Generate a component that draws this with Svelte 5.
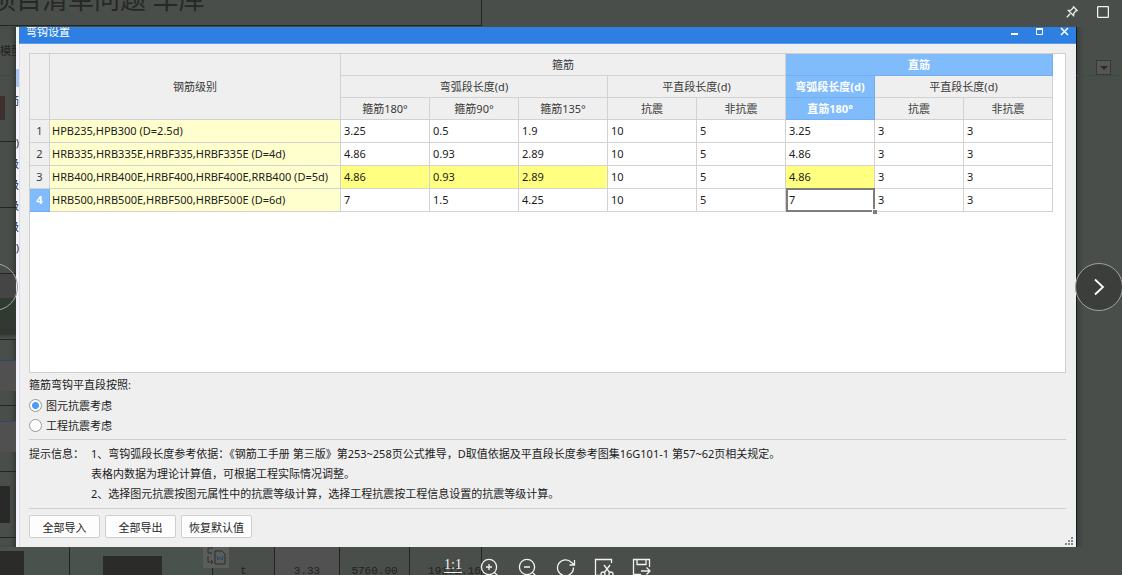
<script lang="ts">
  type Row = { name: string; values: string[]; changed?: number[] };

  const rows: Row[] = [
    { name: 'HPB235,HPB300 (D=2.5d)', values: ['3.25', '0.5', '1.9', '10', '5', '3.25', '3', '3'] },
    { name: 'HRB335,HRB335E,HRBF335,HRBF335E (D=4d)', values: ['4.86', '0.93', '2.89', '10', '5', '4.86', '3', '3'] },
    {
      name: 'HRB400,HRB400E,HRBF400,HRBF400E,RRB400 (D=5d)',
      values: ['4.86', '0.93', '2.89', '10', '5', '4.86', '3', '3'],
      changed: [0, 1, 2, 5],
    },
    { name: 'HRB500,HRB500E,HRBF500,HRBF500E (D=6d)', values: ['7', '1.5', '4.25', '10', '5', '7', '3', '3'] },
  ];

  const edgeText = ['筋', ')', '级', '级', '级', '级', ')'];

  let seismic = $state('element');
  let active = $state({ row: 3, col: 5 });
</script>

<div class="viewer">
  <header class="top">
    <div class="sheet-title">项目清单问题 车库</div>
    <div class="top-actions">
      <button class="icon" aria-label="置顶">
        <svg width="12" height="12" viewBox="0 0 12 12">
          <path d="M7.5 .8l3.7 3.7-1.2.4-2.1 2.1-.3 2.6-5.2-5.2 2.6-.3 2.1-2.1zM4.2 7.8L.8 11.2" />
        </svg>
      </button>
      <button class="icon" aria-label="最大化">
        <svg width="12" height="12" viewBox="0 0 12 12"><rect x=".6" y=".6" width="10.8" height="10.8" rx="1" /></svg>
      </button>
    </div>
  </header>

  <aside class="left">
    <div class="strip first">模型</div>
    <div class="strip"><i class="thumb brown"></i></div>
    <div class="strip"></div>
    <div class="strip"></div>
    <div class="strip cad"></div>
    <div class="strip"><i class="thumb pale"></i></div>
    <div class="strip"><i class="thumb grey"></i></div>
    <div class="strip"><i class="thumb dark"></i></div>
  </aside>

  <div class="edge">
    <i class="edge-mark"></i>
    {#each edgeText as t}<span>{t}</span>{/each}
  </div>

  <main class="dialog">
    <div class="titlebar">
      <h1>弯钩设置</h1>
      <div class="win-btns">
        <button aria-label="最小化"><svg width="9" height="9" viewBox="0 0 9 9"><path d="M1 7h7" /></svg></button>
        <button aria-label="还原"><svg width="9" height="9" viewBox="0 0 9 9"><path class="bar" d="M1 2h7" /><path class="box" d="M1.5 2v5.5h6V2" /></svg></button>
        <button aria-label="关闭"><svg width="9" height="9" viewBox="0 0 9 9"><path d="M1 1l7 7M8 1L1 8" /></svg></button>
      </div>
    </div>

    <div class="body">
      <div class="frame">
        <table>
          <colgroup>
            <col class="c-num" />
            <col class="c-name" />
            {#each Array(8) as _}<col class="c-val" />{/each}
          </colgroup>
          <thead>
            <tr>
              <th rowspan="3"></th>
              <th rowspan="3">钢筋级别</th>
              <th colspan="5">箍筋</th>
              <th colspan="3" class="on">直筋</th>
            </tr>
            <tr>
              <th colspan="3">弯弧段长度(d)</th>
              <th colspan="2">平直段长度(d)</th>
              <th class="on">弯弧段长度(d)</th>
              <th colspan="2">平直段长度(d)</th>
            </tr>
            <tr>
              <th>箍筋180°</th>
              <th>箍筋90°</th>
              <th>箍筋135°</th>
              <th>抗震</th>
              <th>非抗震</th>
              <th class="on">直筋180°</th>
              <th>抗震</th>
              <th>非抗震</th>
            </tr>
          </thead>
          <tbody>
            {#each rows as row, r}
              <tr>
                <th class:on={active.row === r}>{r + 1}</th>
                <td class="name">{row.name}</td>
                {#each row.values as v, c}
                  <td
                    class:changed={row.changed?.includes(c)}
                    class:active={active.row === r && active.col === c}
                    onclick={() => (active = { row: r, col: c })}
                  >{v}</td>
                {/each}
              </tr>
            {/each}
          </tbody>
        </table>
      </div>

      <fieldset>
        <legend>箍筋弯钩平直段按照:</legend>
        <label><input type="radio" name="seismic" value="element" bind:group={seismic} />图元抗震考虑</label>
        <label><input type="radio" name="seismic" value="project" bind:group={seismic} />工程抗震考虑</label>
      </fieldset>

      <div class="hints">
        <span class="hint-label">提示信息：</span>
        <div>
          <p>1、弯钩弧段长度参考依据：《钢筋工手册 第三版》第253~258页公式推导，D取值依据及平直段长度参考图集16G101-1 第57~62页相关规定。</p>
          <p>表格内数据为理论计算值，可根据工程实际情况调整。</p>
          <p>2、选择图元抗震按图元属性中的抗震等级计算，选择工程抗震按工程信息设置的抗震等级计算。</p>
        </div>
      </div>

      <div class="actions">
        <button>全部导入</button>
        <button>全部导出</button>
        <button>恢复默认值</button>
      </div>
    </div>
    <svg class="grip" width="8" height="8" viewBox="0 0 8 8">
      <path d="M6 0h2v2H6zM3 3h2v2H3zM6 3h2v2H6zM0 6h2v2H0zM3 6h2v2H3zM6 6h2v2H6z" />
    </svg>
  </main>

  <aside class="right">
    <div class="filter"><i></i></div>
  </aside>

  <footer class="bottom">
    <div class="cell w1 green"><i class="shot small"></i></div>
    <div class="cell w2 green"><i class="shot"></i></div>
    <div class="cell w3">
      t
      <svg class="paste" width="26" height="21" viewBox="0 0 26 21">
        <rect width="26" height="21" fill="#5a5d5c" stroke="none" />
        <path d="M10 1H5v5h4M5 9v6h5M8 13l2 2-2 2" />
        <path d="M12 4h7l3 3v10H12z" />
        <path class="w" d="M14 9l1 4 2-3 2 3 1-4" />
      </svg>
    </div>
    <div class="cell w4 grey">3.33</div>
    <div class="cell w5">5760.00</div>
    <div class="cell w6">19172.16</div>
  </footer>

  <button class="nav prev" aria-label="上一张"></button>
  <button class="nav next" aria-label="下一张">
    <svg width="12" height="18" viewBox="0 0 12 18"><path d="M2 1.5l8 7.5-8 7.5" /></svg>
  </button>

  <div class="tools">
    <button class="icon ratio">1:1</button>
    <button class="icon" aria-label="放大">
      <svg width="20" height="20" viewBox="0 0 20 20"><circle cx="9" cy="9" r="7.6" /><path d="M9 6v6M6 9h6M14.5 14.5L19 19" /></svg>
    </button>
    <button class="icon" aria-label="缩小">
      <svg width="20" height="20" viewBox="0 0 20 20"><circle cx="9" cy="9" r="7.6" /><path d="M6 9h6M14.5 14.5L19 19" /></svg>
    </button>
    <button class="icon" aria-label="旋转">
      <svg width="20" height="20" viewBox="0 0 20 20"><path d="M17.5 9.5A8 8 0 1 1 15.5 4.5L18 6.5M18.5 2v5h-5" /></svg>
    </button>
    <button class="icon" aria-label="截图">
      <svg width="20" height="20" viewBox="0 0 20 20">
        <path d="M17.5 5V1.5h-16v16H6M10 7l6 8M16 7l-6 8" />
        <circle cx="9" cy="16" r="2" /><circle cx="17" cy="16" r="2" />
      </svg>
    </button>
    <button class="icon" aria-label="另存为">
      <svg width="20" height="20" viewBox="0 0 20 20"><path d="M17.5 9V1.5h-16v15H9M5 1.5v5h9v-5M9 13h9M14.5 9.5L18 13l-3.5 3.5" /></svg>
    </button>
  </div>
</div>

<style>
:global(body) { margin: 0; background: #4a4e4a; }
.viewer {
  position: relative;
  display: grid;
  grid-template-columns: 16px 3px minmax(0, 1fr) 46px;
  grid-template-rows: 27px 1fr 28px;
  min-height: 100vh;
  overflow: hidden;
  background: #4a4e4a;
  font-family: "Noto Sans", "Noto Sans CJK SC", sans-serif;
  font-size: 11px;
  color: #1c1c1c;
}
button { font: inherit; padding: 0; cursor: pointer; }
h1, p { margin: 0; font-size: inherit; font-weight: normal; }
svg { display: block; fill: none; }

.top {
  grid-column: 1 / -1;
  display: flex;
  justify-content: space-between;
}
.sheet-title {
  width: 482px;
  height: 26px;
  box-sizing: border-box;
  overflow: hidden;
  border-right: 1px solid #222422;
  border-bottom: 1px solid #222422;
  font-family: "Liberation Serif", "Noto Sans CJK SC", serif;
  font-size: 26px;
  line-height: 2px;
  text-indent: -10px;
  white-space: nowrap;
  color: #262826;
}
.top-actions { display: flex; align-items: center; gap: 19px; padding-right: 13px; height: 24px; }
.icon { display: block; border: 0; background: none; color: #f2f2f2; }
.icon svg { stroke: currentColor; stroke-width: 1.3; }

.left { overflow: hidden; box-shadow: inset -4px 0 4px -2px #333633; }
.strip { box-sizing: border-box; height: 66px; border-bottom: 1px solid #232523; overflow: hidden; }
.strip.first {
  height: 49px;
  border-color: #3a5038;
  line-height: 48px;
  white-space: nowrap;
  color: #202220;
}
.strip.cad { background: linear-gradient(#454545 24px, #2f3c2f 24px, #333633 60px, #4a4e4a 64px); }
.thumb { display: block; width: 16px; margin-top: 20px; }
.thumb.brown { width: 5px; height: 24px; background: #3d302e; }
.thumb.pale { height: 30px; background: #515051; border-top: 1px solid #354764; }
.thumb.grey { margin-top: 15px; height: 30px; background: #505050; border-top: 1px solid #354764; }
.thumb.dark { width: 10px; margin-top: 14px; height: 37px; background: #292929; }

.edge {
  display: flex;
  flex-direction: column;
  overflow: hidden;
  background: #f4f4fa;
  line-height: 21px;
}
.edge span { display: block; height: 21px; width: 11px; margin-left: -8px; text-align: right; flex: none; color: #26264a; }
.edge span:nth-of-type(1) { margin-bottom: 21px; }
.edge-mark { height: 18px; margin: 42px 0 3px; background: #a9c4ee; flex: none; }

.dialog {
  position: relative;
  display: flex;
  flex-direction: column;
  background: #efefef;
}
.titlebar {
  display: flex;
  justify-content: space-between;
  align-items: center;
  height: 17px;
  box-sizing: border-box;
  padding: 0 7px 7px;
  background: #2d80e2;
  border-bottom: 1px solid #5b9dec;
  overflow: hidden;
  line-height: 10px;
  color: #fff;
}
.win-btns { display: flex; gap: 16px; }
.win-btns button { border: 0; background: none; color: #fff; }
.win-btns svg { stroke: #fff; stroke-width: 2; }
.win-btns .box { stroke-width: 1; }
.win-btns button:last-child svg { stroke-width: 1.5; }
.body {
  flex: 1;
  display: flex;
  flex-direction: column;
  padding: 9px 10px 9px 9px;
  border-left: 1px solid #dcdce8;
}
.frame { flex: 1; background: #fff; border: 1px solid #cfcfcf; overflow: hidden; }

table { width: 1023px; table-layout: fixed; border-collapse: separate; border-spacing: 0; }
.c-num { width: 20px; }
.c-name { width: 291px; }
.c-val { width: 89px; }
th, td {
  box-sizing: border-box;
  height: 23px;
  padding: 0 3px;
  border-right: 1px solid #d2d2d2;
  border-bottom: 1px solid #d2d2d2;
  line-height: 20px;
  white-space: nowrap;
}
th { padding: 0; background: #efefef; font-weight: normal; color: #3a3a3a; }
thead th { height: 22px; }
th.on { background: #80bbfb; border-color: #75aeee; color: #fff; font-weight: bold; }
td.name { padding: 0 2px; background: #ffffce; }
td.changed { background: #ffff80; }
td.active { position: relative; }
td.active::before {
  content: '';
  position: absolute;
  inset: -1px -1px -1px 0;
  border: 2px solid #7d7d7d;
}
td.active::after {
  content: '';
  position: absolute;
  right: -3px;
  bottom: -3px;
  width: 4px;
  height: 4px;
  background: #7d7d7d;
  border: 1px solid #fff;
  border-width: 1px 0 0 1px;
}

fieldset { margin: 0; padding: 0 0 4px; border: 0; border-bottom: 1px solid #cdcdcd; }
legend { padding: 2px 0 0; line-height: 20px; }
label { display: flex; align-items: center; gap: 4px; height: 20px; }
input {
  appearance: none;
  width: 13px;
  height: 13px;
  margin: 0;
  border: 1px solid #989898;
  border-radius: 50%;
  background: #fff;
}
input:checked { background: radial-gradient(circle, #4a9cf5 0 3px, #fff 4px); }

.hints { display: flex; padding: 4px 0; border-bottom: 1px solid #cdcdcd; line-height: 20px; }
.hint-label { width: 62px; flex: none; }

.actions { display: flex; gap: 5px; padding-top: 6px; }
.actions button {
  width: 71px;
  height: 23px;
  border: 1px solid #cfcfcf;
  border-radius: 2px;
  background: #fdfdfd;
  color: #1c1c1c;
}
.actions button:hover { background: #e8f2fd; }
.grip { position: absolute; right: 3px; bottom: 2px; fill: #85888c; }

.right { background: linear-gradient(90deg, #141c22 0 1px, #3d413d 1px, #4a4e4a 8px); }
.filter {
  display: flex;
  justify-content: flex-end;
  padding: 33px 11px 0 0;
  border-bottom: 1px solid #3a5038;
}
.filter i {
  display: grid;
  place-items: center;
  width: 13px;
  height: 13px;
  border: 1px solid #363936;
  background: #565656;
}
.filter i::after { content: ''; border: 4px solid transparent; border-top-color: #2a2a2a; border-bottom: 0; }

.bottom {
  grid-column: 1 / -1;
  display: flex;
  height: 28px;
  overflow: hidden;
  font-family: "Liberation Mono", monospace;
  font-size: 11px;
  line-height: 49px;
  text-align: center;
  color: #202220;
}
.cell { position: relative; box-sizing: border-box; border-right: 1px solid #222422; }
.cell.green { background: #49524c; }
.cell.grey { background: #525151; }
.w1 { width: 70px; }
.w2 { width: 143px; }
.w3 { width: 62px; }
.w4 { width: 65px; }
.w5 { width: 70px; }
.w6 { width: 72px; padding-left: 18px; }
.shot { display: block; width: 59px; height: 19px; margin: 9px auto 0 33px; background: #2b2c2a; }
.shot.small { width: 24px; height: 24px; margin: 4px 0 0; }
.paste { position: absolute; left: -10px; top: 0; stroke: #2c2e2c; }
.paste .w { stroke: #28466e; }

.nav {
  position: absolute;
  top: 263px;
  display: grid;
  place-items: center;
  width: 48px;
  height: 48px;
  border: 1px solid #a0a3a0;
  border-radius: 50%;
  background: #3b3e3b;
}
.nav svg { stroke: #fff; stroke-width: 1.8; }
.prev { left: -30px; background: none; }
.next { right: -1px; }

.tools {
  position: absolute;
  left: 0;
  right: 26px;
  bottom: -3px;
  height: 20px;
  display: flex;
  justify-content: center;
  gap: 18px;
}
.ratio {
  width: 18px;
  height: 15px;
  border-bottom: 1px solid #f2f2f2;
  font-family: "Liberation Serif", serif;
  font-size: 14px;
  line-height: 14px;
}
</style>
